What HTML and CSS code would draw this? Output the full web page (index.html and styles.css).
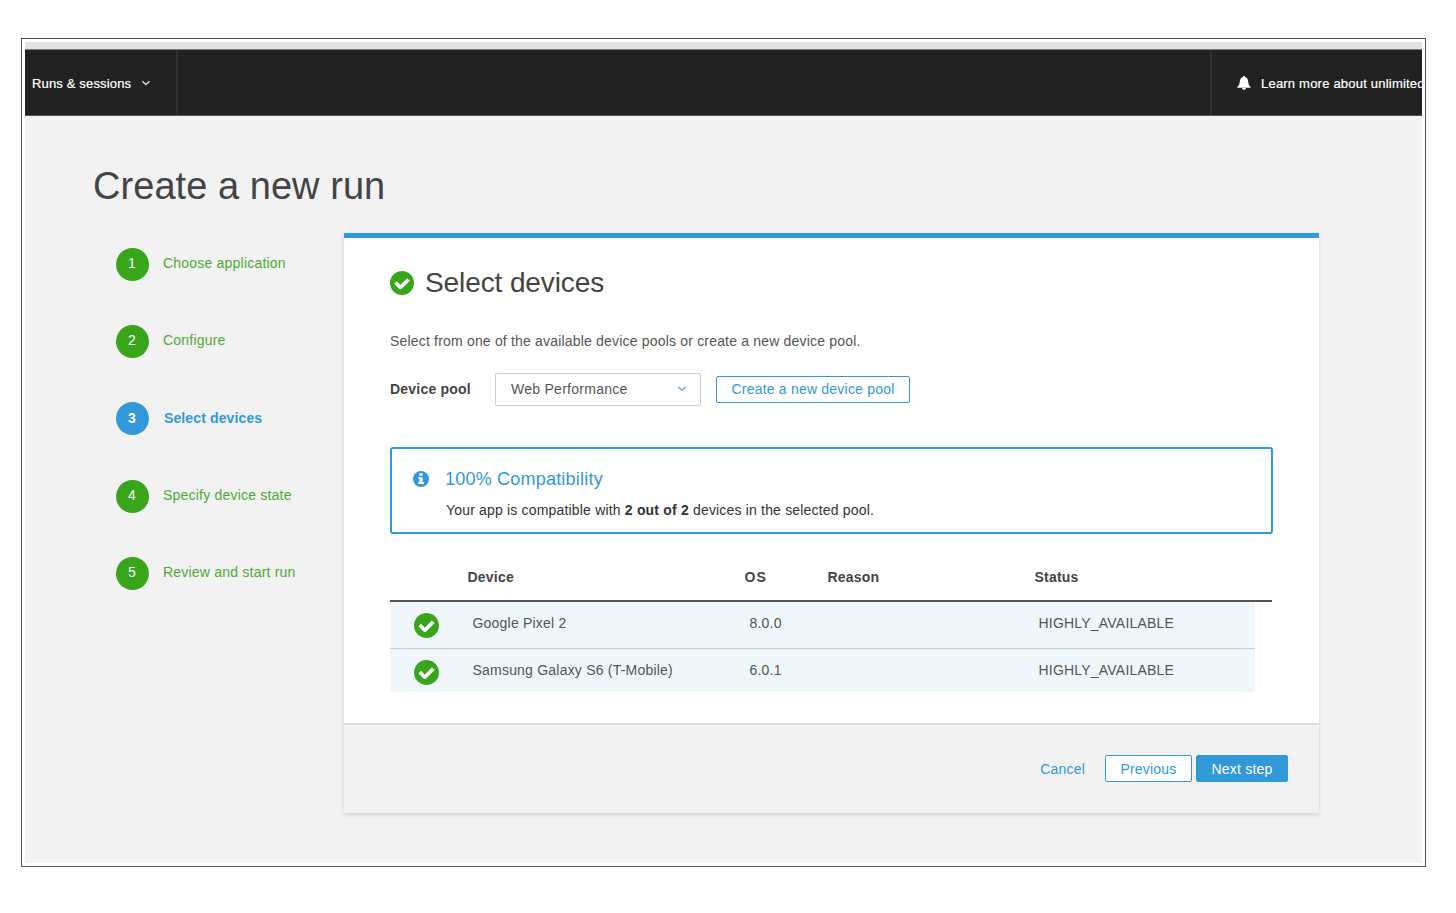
FILE: index.html
```html
<!DOCTYPE html>
<html lang="en">
<head>
<meta charset="utf-8">
<title>Create a new run</title>
<link rel="stylesheet" href="styles.css">
</head>
<body>
<svg class="defs" width="0" height="0" aria-hidden="true">
  <symbol id="check" viewBox="0 0 24 24">
    <circle cx="12" cy="12" r="12" fill="#38a51b"/>
    <path d="M5.500 11.600l4.900 4.900 8.100-8.100" fill="none" stroke="#fff" stroke-width="3.500" stroke-linejoin="round"/>
  </symbol>
</svg>
<div class="frame">
  <div class="strip"></div>
  <header class="nav">
    <a class="nav-item nav-runs"><span>Runs &amp; sessions</span>
      <svg width="10" height="8" viewBox="0 0 10 8"><path d="M1.300 2.200l3.600 3.300 3.600-3.300" fill="none" stroke="#ddd" stroke-width="1.400"/></svg>
    </a>
    <a class="nav-item nav-learn">
      <svg width="14" height="14" viewBox="0 0 14 14"><path d="M7 0c.7 0 1.100.4 1.200 1 2 .6 2.800 2.300 3 4.600.2 2.800.8 4.300 2.500 5.400v.8H.3V11C2 9.900 2.600 8.400 2.800 5.600 3 3.300 3.800 1.600 5.800 1 5.900.4 6.300 0 7 0zM5 12h4c0 1-.9 1.800-2 1.800S5 13 5 12z" fill="#fff"/></svg>
      <span>Learn more about unlimited</span>
    </a>
  </header>
  <main class="page">
    <h1>Create a new run</h1>
    <div class="columns">
      <ol class="steps">
        <li><b>1</b><span>Choose application</span></li>
        <li><b>2</b><span>Configure</span></li>
        <li class="current"><b>3</b><span>Select devices</span></li>
        <li><b>4</b><span>Specify device state</span></li>
        <li><b>5</b><span>Review and start run</span></li>
      </ol>
      <section class="panel">
        <div class="content">
          <h2><svg width="24" height="24"><use href="#check"/></svg><span>Select devices</span></h2>
          <p class="intro">Select from one of the available device pools or create a new device pool.</p>
          <div class="pool">
            <label>Device pool</label>
            <div class="select"><span>Web Performance</span>
              <svg width="10" height="8" viewBox="0 0 10 8"><path d="M1.300 2l3.600 3.300L8.500 2" fill="none" stroke="#5a9fd6" stroke-width="1.200"/></svg>
            </div>
            <button class="btn create">Create a new device pool</button>
          </div>
          <div class="alert">
            <svg width="16" height="16" viewBox="0 0 16 16"><circle cx="8" cy="8" r="8" fill="#3299d9"/><path d="M6.400 2.300h3.100v2.400H6.400zM5.400 6.300h4.200v4.800h1.200v1.800H5.300v-1.800h1.200V8H5.400z" fill="#fff"/></svg>
            <div>
              <h3>100% Compatibility</h3>
              <p>Your app is compatible with <strong>2 out of 2</strong> devices in the selected pool.</p>
            </div>
          </div>
          <div class="table">
            <div class="row head"><i></i><span>Device</span><span class="os">OS</span><span>Reason</span><span>Status</span></div>
            <div class="row"><svg width="25" height="25"><use href="#check"/></svg><span>Google Pixel 2</span><span>8.0.0</span><span></span><span>HIGHLY_AVAILABLE</span></div>
            <div class="row"><svg width="25" height="25"><use href="#check"/></svg><span>Samsung Galaxy S6 (T-Mobile)</span><span>6.0.1</span><span></span><span>HIGHLY_AVAILABLE</span></div>
          </div>
        </div>
        <footer class="actions">
          <a>Cancel</a>
          <button class="btn prev">Previous</button>
          <button class="btn primary">Next step</button>
        </footer>
      </section>
    </div>
  </main>
</div>
</body>
</html>
```
FILE: styles.css
```css
* { box-sizing: border-box; }
body { margin: 0; background: #fff; color: #444; font: 14px/20px "Liberation Sans", Arial, sans-serif; letter-spacing: .21px; }
h1, h2, h3, p, ol { margin: 0; padding: 0; font-weight: normal; }
span, a, label, h1, h3, p, button { white-space: nowrap; }
.defs { display: block; }
.frame { width: 1405px; height: 829px; margin: 38px 0 0 21px; border: 1px solid #555; padding: 3px; }
.strip { height: 8px; background: #e2e2e2; border-bottom: 1px solid #777e7e; }
.nav { display: flex; justify-content: space-between; height: 66px; background: #222; border-bottom: 1px solid #555; color: #fff; font-size: 13px; overflow: hidden; }
.nav-item { display: flex; align-items: center; padding-top: 1px; }
.nav-item span { padding-top: 1px; -webkit-text-stroke: .2px #fff; }
.nav-runs { width: 153px; padding-left: 7px; border-right: 2px solid #303030; gap: 10px; letter-spacing: .16px; }
.nav-learn { width: 212px; padding-left: 25px; border-left: 2px solid #303030; gap: 10px; }
.nav-learn svg { flex: none; }
.page { height: 747px; background: #f2f2f2; padding-top: 48px; }
h1 { margin-left: 68px; font-size: 38px; line-height: 44px; letter-spacing: .05px; }
.columns { display: flex; margin-top: 25px; }
.steps { list-style: none; width: 318.500px; padding: 13.700px 0 0 90px; }
.steps li { display: flex; align-items: center; height: 34px; margin-bottom: 43.300px; gap: 14px; color: #4cab35; }
.steps b { width: 34px; height: 34px; border-radius: 50%; background: #38a51b; background-clip: content-box; padding: .5px; color: #fff; font-weight: normal; text-align: center; line-height: 33px; }
.steps span { padding-bottom: 1px; }
.steps .current { color: #3299d9; font-weight: bold; gap: 15px; letter-spacing: .12px; }
.steps .current b { background-color: #3299d9; font-weight: bold; }
.panel { width: 975.500px; height: 580px; border-top: 5px solid #3299d9; background: #fff; box-shadow: 0 2px 4px rgba(0,0,0,.12); }
.content { height: 485px; padding: 27px 46.500px 0; }
h2 { display: flex; align-items: center; gap: 11px; font-size: 28px; line-height: 36px; letter-spacing: -.1px; }
.intro { margin-top: 30px; color: #555; letter-spacing: .185px; }
.pool { display: flex; align-items: center; margin-top: 22px; height: 33px; }
.pool label { width: 105px; font-weight: bold; padding-bottom: 1px; }
.select { display: flex; justify-content: space-between; align-items: center; width: 206px; height: 33px; padding: 0 13px 1px 15px; border: 1px solid #ccc; border-radius: 2px; color: #555; letter-spacing: .27px; }
.btn { height: 27px; padding: 0; border: 1px solid #3299d9; border-radius: 2px; background: #fff; color: #3299d9; font: inherit; letter-spacing: inherit; }
.create { width: 194px; margin-left: 15px; padding-bottom: 1px; }
.alert { display: flex; gap: 16px; height: 87px; margin-top: 41px; padding: 20px 21px; border: 2px solid #3299d9; border-radius: 3px; }
.alert svg { margin-top: 2px; }
.alert h3 { font-size: 18px; line-height: 20px; color: #3299d9; }
.alert p { margin-top: 11px; padding-left: 1px; color: #333; letter-spacing: .18px; }
.table { width: 882px; }
.row { display: grid; grid-template-columns: 82.500px 277px 83px 206px 1fr; align-items: center; width: 865px; color: #555; background: #eff7fb; }
.row svg { margin-left: 23.500px; margin-top: 5px; }
.row + .row { height: 47px; padding-bottom: 4px; border-bottom: 1px solid #ccc; }
.row + .row + .row { height: 43px; padding: 0 0 1px; border: 0; }
.row.head { grid-template-columns: 77.500px 277px 83px 207px 1fr; width: 882px; height: 68px; padding-top: 19px; border-bottom: 2px solid #555; background: #fff; color: #444; font-weight: bold; }
.os { letter-spacing: 1px; }
.actions { display: flex; align-items: center; height: 90px; padding: 0 31px 1px 0; border-top: 2px solid #ddd; background: #f2f2f2; justify-content: flex-end; }
.actions a { color: #3299d9; margin-right: 20px; }
.prev { width: 87px; margin-right: 4px; }
.primary { width: 92px; background: #3299d9; color: #fff; }
```
